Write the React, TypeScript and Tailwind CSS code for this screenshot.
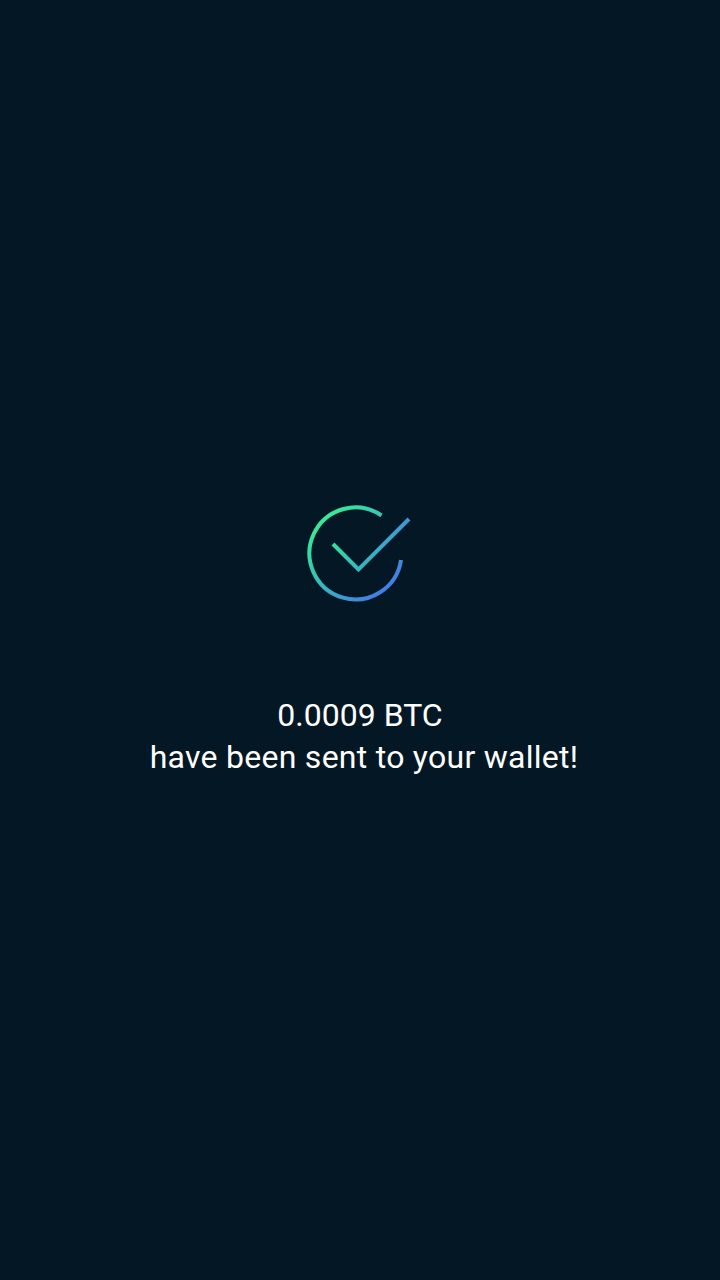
export default function App() {
  return (
    <main className="flex min-h-screen w-full flex-col items-center bg-[#041724] pt-[500px] font-['Roboto',sans-serif] text-white">
      <svg className="h-[110px] w-[110px]" viewBox="305 500 110 110" fill="none" aria-hidden="true">
        <defs>
          <linearGradient id="ring" gradientUnits="userSpaceOnUse" x1="322" y1="520" x2="385" y2="588">
            <stop stopColor="#36ea99" />
            <stop offset="0.5" stopColor="#38b9bc" />
            <stop offset="1" stopColor="#427fe2" />
          </linearGradient>
          <linearGradient id="tick" gradientUnits="userSpaceOnUse" x1="333" y1="544" x2="409" y2="544">
            <stop stopColor="#35e09d" />
            <stop offset="0.33" stopColor="#39b5bf" />
            <stop offset="1" stopColor="#4196d2" />
          </linearGradient>
        </defs>
        <path d="M381.5 515.5A46 46 0 1 0 401 560" stroke="url(#ring)" strokeWidth="4" />
        <path d="M333 544L358.5 569.5L409 519" stroke="url(#tick)" strokeWidth="4" />
      </svg>
      <p className="mt-[84px] text-center text-[32px] leading-[42px] whitespace-nowrap">
        <span className="block">0.0009 BTC</span>
        <span className="block pl-2 tracking-[0.26px]">have been sent to your wallet!</span>
      </p>
    </main>
  );
}
